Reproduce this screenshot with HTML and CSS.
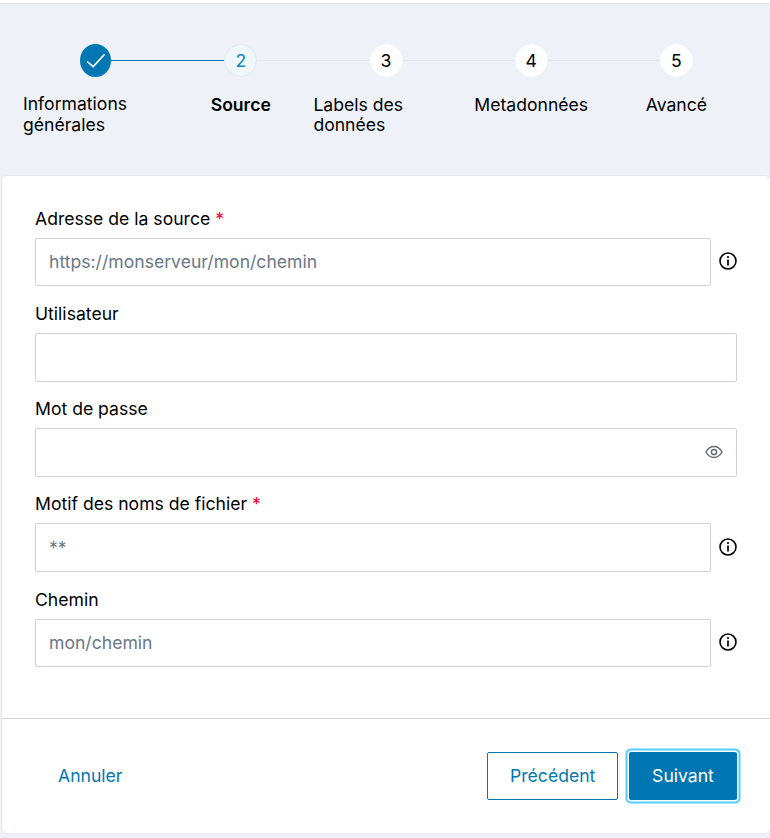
FILE: index.html
```html
<!DOCTYPE html>
<html lang="fr">
<head>
<meta charset="utf-8">
<title>Source</title>
<link rel="stylesheet" href="styles.css">
</head>
<body>
<div class="page">
  <header class="stepper">
    <div class="step">
      <div class="step-head">
        <span class="line line-none"></span>
        <span class="dot dot-done">
          <svg width="19" height="18" viewBox="0 0 19 18" fill="none"><path d="M1.2 9.5 7.2 14.6 18.5 2.4" stroke="#fff" stroke-width="1.6"/></svg>
        </span>
        <span class="line line-on"></span>
      </div>
      <div class="step-label step-label-first">Informations générales</div>
    </div>
    <div class="step">
      <div class="step-head">
        <span class="line line-on"></span>
        <span class="dot dot-current">2</span>
        <span class="line"></span>
      </div>
      <div class="step-label step-label-current">Source</div>
    </div>
    <div class="step">
      <div class="step-head">
        <span class="line"></span>
        <span class="dot">3</span>
        <span class="line"></span>
      </div>
      <div class="step-label">Labels des données</div>
    </div>
    <div class="step">
      <div class="step-head">
        <span class="line"></span>
        <span class="dot">4</span>
        <span class="line"></span>
      </div>
      <div class="step-label">Metadonnées</div>
    </div>
    <div class="step">
      <div class="step-head">
        <span class="line"></span>
        <span class="dot">5</span>
        <span class="line line-none"></span>
      </div>
      <div class="step-label">Avancé</div>
    </div>
  </header>

  <main class="card">
    <form class="form">
      <div class="field">
        <label class="field-label">Adresse de la source <span class="req">*</span></label>
        <div class="field-row">
          <input class="input" type="text" placeholder="https://monserveur/mon/chemin">
          <svg class="info" width="18" height="18" viewBox="0 0 18 18" fill="none"><circle cx="9" cy="9" r="8" stroke="#000" stroke-width="1.6"/><path d="M9 7.6V13.4" stroke="#000" stroke-width="1.7"/><circle cx="9" cy="5" r="1.1" fill="#000"/></svg>
        </div>
      </div>
      <div class="field">
        <label class="field-label">Utilisateur</label>
        <div class="field-row">
          <input class="input" type="text">
        </div>
      </div>
      <div class="field">
        <label class="field-label">Mot de passe</label>
        <div class="field-row field-row-eye">
          <input class="input" type="password">
          <svg class="eye" width="18" height="14" viewBox="0 0 18 14" fill="none"><path d="M1 7C3 3.4 5.8 1.6 9 1.6S15 3.4 17 7C15 10.6 12.2 12.4 9 12.4S3 10.6 1 7Z" stroke="#666b73" stroke-width="1.5"/><circle cx="9" cy="7" r="2.6" stroke="#666b73" stroke-width="1.5"/></svg>
        </div>
      </div>
      <div class="field">
        <label class="field-label">Motif des noms de fichier <span class="req">*</span></label>
        <div class="field-row">
          <input class="input" type="text" placeholder="**">
          <svg class="info" width="18" height="18" viewBox="0 0 18 18" fill="none"><circle cx="9" cy="9" r="8" stroke="#000" stroke-width="1.6"/><path d="M9 7.6V13.4" stroke="#000" stroke-width="1.7"/><circle cx="9" cy="5" r="1.1" fill="#000"/></svg>
        </div>
      </div>
      <div class="field">
        <label class="field-label">Chemin</label>
        <div class="field-row">
          <input class="input" type="text" placeholder="mon/chemin">
          <svg class="info" width="18" height="18" viewBox="0 0 18 18" fill="none"><circle cx="9" cy="9" r="8" stroke="#000" stroke-width="1.6"/><path d="M9 7.6V13.4" stroke="#000" stroke-width="1.7"/><circle cx="9" cy="5" r="1.1" fill="#000"/></svg>
        </div>
      </div>
    </form>
    <footer class="actions">
      <button class="btn btn-link" type="button">Annuler</button>
      <div class="actions-right">
        <button class="btn btn-outline" type="button">Précédent</button>
        <button class="btn btn-primary" type="button">Suivant</button>
      </div>
    </footer>
  </main>
</div>
</body>
</html>
```

FILE: styles.css
```css
* {
  box-sizing: border-box;
}

html,
body {
  margin: 0;
  background: #fff;
}

body {
  padding-top: 3px;
  font-family: Inter, "Liberation Sans", sans-serif;
  font-size: 17.6px;
  color: #000;
}

.page {
  height: 835px;
  overflow: hidden;
  background: #eef1f8;
  border-top: 1px solid #dfe1e6;
}

.stepper {
  display: grid;
  grid-template-columns: repeat(5, 1fr);
  width: 749px;
  height: 172px;
  padding: 40px 0 0 23px;
}

.step {
  display: flex;
  flex-direction: column;
  align-items: center;
  min-width: 0;
}

.step-head {
  display: flex;
  align-items: center;
  width: 100%;
  height: 33px;
}

.line {
  flex: 1;
  height: 1px;
  background: #e3e6ec;
}

.line-on {
  background: #0077b3;
}

.line-none {
  background: transparent;
}

.dot {
  display: flex;
  align-items: center;
  justify-content: center;
  flex: none;
  width: 33px;
  height: 33px;
  border-radius: 50%;
  background: #fff;
  border: 1px solid #fbfcfd;
  line-height: 1;
}

.dot-done {
  width: 31px;
  background: #0077b3;
  border: 0;
}

.dot-current {
  background: #f0f7fb;
  border-color: #e2e9ec;
  color: #0d84c4;
}

.step-label {
  margin-top: 17.9px;
  line-height: 20.2px;
  text-align: left;
}

.step-label-first {
  margin-top: 16.4px;
  line-height: 21px;
}

.step-label-current {
  font-weight: 600;
}

.card {
  display: flex;
  flex-direction: column;
  width: 768px;
  height: 657px;
  margin-left: 2px;
  background: #fff;
  border-radius: 5px;
  box-shadow: 0 0 0 1px #e6e9f0;
}

.form {
  display: flex;
  flex-direction: column;
  gap: 0;
  height: 542px;
  padding: 29.6px 33px 0;
}

.field {
  height: 95.25px;
}

.field-label {
  display: block;
  height: 32px;
  line-height: 26px;
}

.req {
  color: #f5002d;
}

.field-row {
  position: relative;
  display: flex;
  align-items: center;
  gap: 8px;
}

.input {
  flex: 1;
  min-width: 0;
  height: 48.8px;
  padding: 0 13px 1px;
  border: 1px solid #ced1d8;
  border-radius: 2px;
  font: inherit;
  color: #000;
  background: #fff;
  outline: none;
}

.input::placeholder {
  color: #6b7785;
  opacity: 1;
}

.info {
  flex: none;
  margin-bottom: 1.5px;
}

.eye {
  position: absolute;
  right: 14px;
  top: 17px;
}

.actions {
  display: flex;
  align-items: center;
  justify-content: space-between;
  flex: 1;
  padding: 0 33px;
  border-top: 1px solid #d4d5d8;
}

.actions-right {
  display: flex;
  gap: 11px;
}

.btn {
  height: 48px;
  padding: 0 22px 2px;
  border: 1px solid transparent;
  border-radius: 2px;
  font: inherit;
  background: transparent;
  color: #0077b3;
}

.btn-outline {
  width: 131px;
  background: #fff;
  border-color: #0077b3;
}

.btn-primary {
  width: 108px;
  background: #0077b3;
  color: #fff;
  box-shadow: 0 0 0 1.5px #fff, 0 0 0 3.5px #55ccff;
}
```
